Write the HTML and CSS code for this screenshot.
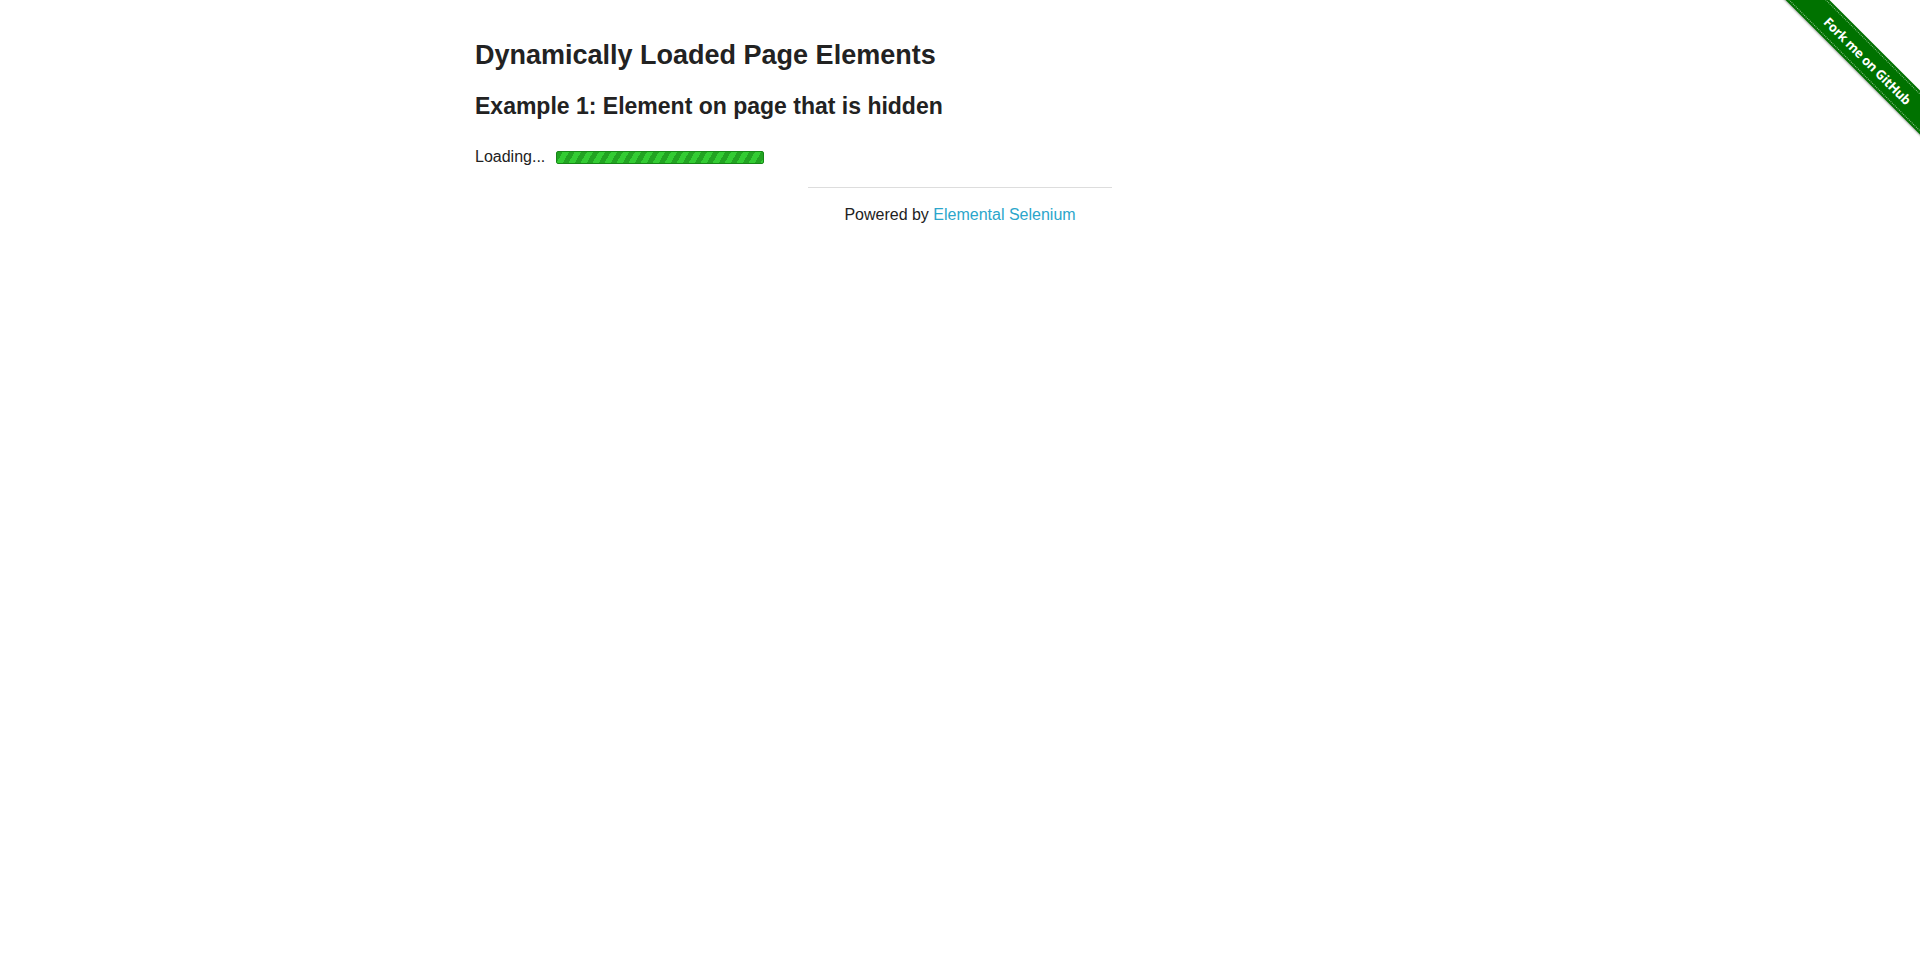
FILE: index.html
```html
<!DOCTYPE html>
<html lang="en">
<head>
<meta charset="utf-8">
<title>The Internet</title>
<link rel="stylesheet" href="styles.css">
</head>
<body>
<a class="ribbon" href="#"><span class="ribbon-band"><span class="ribbon-text">Fork me on GitHub</span></span></a>
<div class="page">
  <div class="content">
    <h3 class="title">Dynamically Loaded Page Elements</h3>
    <h4 class="subtitle">Example 1: Element on page that is hidden</h4>
    <div class="loading">
      <span class="loading-text">Loading...</span>
      <span class="loader-bar"></span>
    </div>
  </div>
  <div class="footer">
    <hr class="rule">
    <div class="powered">Powered by <a href="#" class="link">Elemental Selenium</a></div>
  </div>
</div>
</body>
</html>
```

FILE: styles.css
```css
html, body {
  margin: 0;
  padding: 0;
  background: #fff;
}
body {
  font-family: "Liberation Sans", Arial, Helvetica, sans-serif;
  color: #222;
}
.page {
  display: flex;
  flex-direction: column;
  padding-top: 38px;
}
.content {
  width: 970px;
  margin: 0 auto;
  display: flex;
  flex-direction: column;
}
.title {
  margin: 0 0 20px 0;
  font-size: 27px;
  line-height: 34px;
  font-weight: bold;
  color: #222;
}
.subtitle {
  margin: 0 0 26px 0;
  font-size: 23px;
  line-height: 29px;
  font-weight: bold;
  color: #222;
}
.loading {
  display: flex;
  align-items: flex-start;
  font-size: 16px;
  line-height: 20px;
}
.loader-bar {
  display: block;
  margin-left: 11px;
  margin-top: 4px;
  width: 208px;
  height: 13px;
  box-sizing: border-box;
  border: 1px solid #178717;
  border-radius: 2px;
  background: repeating-linear-gradient(120deg, #22a322 0px, #22a322 5px, #33cc33 5px, #33cc33 10.4px);
}
.footer {
  width: 304px;
  margin: 20px auto 0 auto;
  display: flex;
  flex-direction: column;
  align-items: center;
}
.rule {
  width: 100%;
  height: 0;
  margin: 0;
  border: 0;
  border-top: 1px solid #dddddd;
}
.powered {
  margin-top: 17px;
  font-size: 16px;
  line-height: 20px;
  color: #222;
}
.link {
  color: #2ba6cb;
  text-decoration: none;
}
.ribbon {
  position: absolute;
  top: 0;
  right: 0;
  width: 149px;
  height: 149px;
  overflow: hidden;
  text-decoration: none;
}
.ribbon-band {
  position: absolute;
  left: -33px;
  top: 40px;
  width: 250px;
  height: 31px;
  background: #007200;
  transform: rotate(45deg);
  display: flex;
  align-items: center;
  justify-content: center;
  box-shadow: 0 1px 2px rgba(0,0,0,0.35);
}
.ribbon-band::before,
.ribbon-band::after {
  content: "";
  position: absolute;
  left: 0;
  right: 0;
  height: 0;
  border-top: 1px dotted rgba(255,255,255,0.55);
}
.ribbon-band::before { top: 2px; }
.ribbon-band::after { bottom: 2px; }
.ribbon-text {
  font-family: "Open Sans", "Noto Sans", sans-serif;
  font-weight: bold;
  font-size: 13px;
  letter-spacing: -0.3px;
  color: #fff;
  margin-left: 14px;
}
```
